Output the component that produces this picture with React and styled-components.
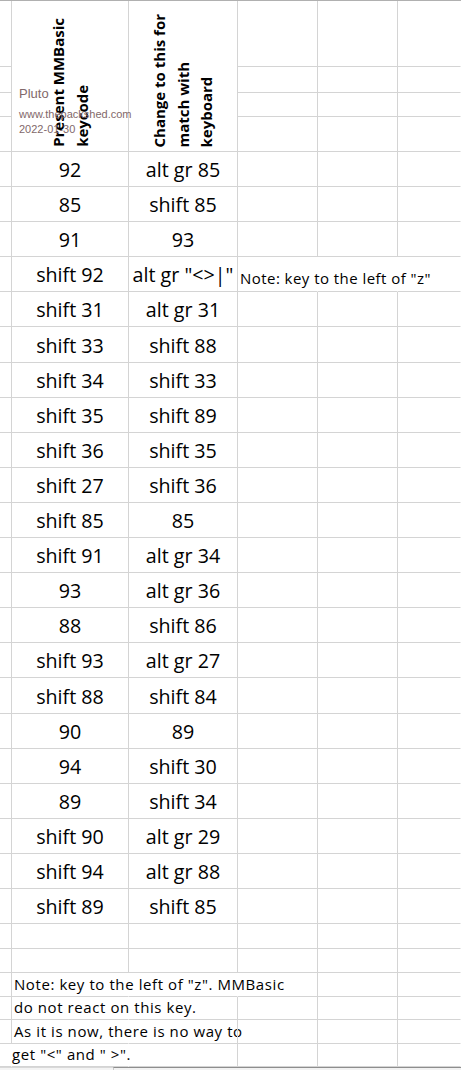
import React from "react";
import styled, { createGlobalStyle, css } from "styled-components";

const GlobalStyle = createGlobalStyle`
  html, body { margin: 0; padding: 0; background: #ffffff; }
  body { width: 461px; height: 1070px; overflow: hidden; font-family: "Open Sans", "Liberation Sans", sans-serif; }
`;

const GRID = "#d4d4d4";

const Page = styled.div`
  position: relative;
  width: 461px;
  height: 1070px;
  background: #fff;
  overflow: hidden;
`;

const Sheet = styled.div`
  display: grid;
  grid-template-columns: 12px 117px 109px 80px 80px 1fr;
  grid-template-rows: 66px 26px 24px 35px repeat(22, 35.1px) 25px 24px 24px 23px 24px 23px;
  border-top: 1px solid #b0b0b0;
`;

const Cell = styled.div`
  box-sizing: border-box;
  border-right: 1px solid ${(p) => (p.$noRight ? "transparent" : GRID)};
  border-bottom: 1px solid ${GRID};
  display: flex;
  align-items: flex-end;
  justify-content: ${(p) => (p.$align === "left" ? "flex-start" : "center")};
  padding: 0 0 ${(p) => p.$pb ?? 3}px ${(p) => p.$pl ?? 0}px;
  white-space: nowrap;
  overflow: visible;
  min-width: 0;
  color: #000;
`;

const HeaderCell = styled(Cell)`
  grid-row: span 4;
  padding-bottom: 4px;
`;

const HeaderText = styled.div`
  writing-mode: vertical-rl;
  transform: rotate(180deg);
  font-family: "Open Sans", "Liberation Sans", sans-serif;
  font-weight: 700;
  font-size: 15px;
  line-height: 23.5px;
  color: #000;
  white-space: nowrap;
`;

const DataText = styled.span`
  font-family: "Open Sans", "Liberation Sans", sans-serif;
  font-size: 19.7px;
  line-height: normal;
  color: #000;
`;

const NoteText = styled.span`
  font-family: "Open Sans", "Liberation Sans", sans-serif;
  font-size: 15px;
  letter-spacing: ${(p) => p.$ls ?? 0.45}px;
  line-height: normal;
  color: #000;
`;

const Watermark = styled.div`
  position: absolute;
  left: 19px;
  top: 86px;
  font-family: "Liberation Sans", Arial, sans-serif;
  color: #82686a;
  pointer-events: none;
`;

const WmLine = styled.div`
  ${(p) =>
    p.$big
      ? css`
          font-size: 13px;
          line-height: 16px;
        `
      : css`
          font-size: 11px;
          line-height: ${p.$lh}px;
          margin-top: ${p.$mt}px;
        `}
  white-space: nowrap;
`;

const BottomBar = styled.div`
  display: flex;
  height: 3px;
`;

const BarPart = styled.div`
  box-sizing: border-box;
  ${(p) =>
    p.$dark
      ? css`
          flex: 1;
          border-top: 1px solid #8e8e8e;
          border-left: 1px solid #c8c8c8;
          background: #f2f2f2;
        `
      : css`
          width: 113px;
          border-top: 1px solid #d8d8d8;
          background: #f4f4f4;
        `}
`;

const rows = [
  ["92", "alt gr 85"],
  ["85", "shift 85"],
  ["91", "93"],
  ["shift 92", 'alt gr "<>|"', 'Note: key to the left of "z"'],
  ["shift 31", "alt gr 31"],
  ["shift 33", "shift 88"],
  ["shift 34", "shift 33"],
  ["shift 35", "shift 89"],
  ["shift 36", "shift 35"],
  ["shift 27", "shift 36"],
  ["shift 85", "85"],
  ["shift 91", "alt gr 34"],
  ["93", "alt gr 36"],
  ["88", "shift 86"],
  ["shift 93", "alt gr 27"],
  ["shift 88", "shift 84"],
  ["90", "89"],
  ["94", "shift 30"],
  ["89", "shift 34"],
  ["shift 90", "alt gr 29"],
  ["shift 94", "alt gr 88"],
  ["shift 89", "shift 85"],
];

const notes = [
  { text: 'Note: key to the left of "z". MMBasic', hideC: true, pl: 2 },
  { text: "do not react on this key.", pl: 2 },
  { text: "As it is now, there is no way to", pl: 2 },
  { text: 'get "<" and " >".', pl: 0, hideA: true },
];

export default function App() {
  const header = [];
  for (let r = 0; r < 4; r++) {
    header.push(<Cell key={`ha${r}`} />);
    if (r === 0) {
      header.push(
        <HeaderCell key="hb">
          <HeaderText>
            Present MMBasic
            <br />
            keycode
          </HeaderText>
        </HeaderCell>
      );
      header.push(
        <HeaderCell key="hc">
          <HeaderText>
            Change to this for
            <br />
            match with
            <br />
            keyboard
          </HeaderText>
        </HeaderCell>
      );
    }
    header.push(<Cell key={`hd${r}`} />);
    header.push(<Cell key={`he${r}`} />);
    header.push(<Cell key={`hf${r}`} $noRight />);
  }

  return (
    <Page>
      <GlobalStyle />
      <Sheet>
        {header}
        {rows.map(([b, c, note], i) => (
          <React.Fragment key={`r${i}`}>
            <Cell />
            <Cell>
              <DataText>{b}</DataText>
            </Cell>
            <Cell>
              <DataText>{c}</DataText>
            </Cell>
            <Cell $align="left" $pl={2} $noRight={!!note}>
              {note && <NoteText>{note}</NoteText>}
            </Cell>
            <Cell $noRight={!!note} />
            <Cell $noRight />
          </React.Fragment>
        ))}
        {[0, 1].map((i) => (
          <React.Fragment key={`e${i}`}>
            <Cell />
            <Cell />
            <Cell />
            <Cell />
            <Cell />
            <Cell $noRight />
          </React.Fragment>
        ))}
        {notes.map((n, i) => (
          <React.Fragment key={`n${i}`}>
            <Cell $noRight={n.hideA} />
            <Cell $align="left" $pl={n.pl} $pb={2} $noRight>
              <NoteText $ls={0.58}>{n.text}</NoteText>
            </Cell>
            <Cell $noRight={n.hideC} />
            <Cell />
            <Cell />
            <Cell $noRight />
          </React.Fragment>
        ))}
      </Sheet>
      <BottomBar>
        <BarPart />
        <BarPart $dark />
      </BottomBar>
      <Watermark>
        <WmLine $big>Pluto</WmLine>
        <WmLine $lh={14} $mt={5}>www.thepackshed.com</WmLine>
        <WmLine $lh={15} $mt={1}>2022-01-30</WmLine>
      </Watermark>
    </Page>
  );
}
